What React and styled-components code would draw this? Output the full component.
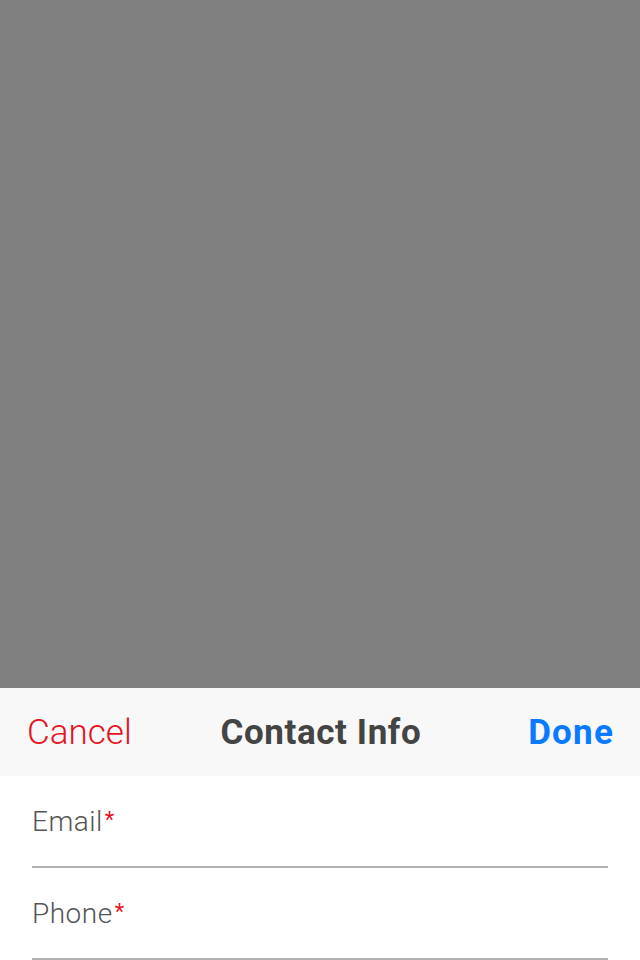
import React from 'react';
import styled, { createGlobalStyle } from 'styled-components';

const GlobalStyle = createGlobalStyle`
  html, body {
    margin: 0;
    padding: 0;
    background: #808080;
    font-family: Roboto, 'Noto Sans', sans-serif;
  }
`;

const Screen = styled.div`
  display: flex;
  flex-direction: column;
  justify-content: flex-end;
  height: 960px;
  background: #808080;
`;

const Sheet = styled.div`
  background: #ffffff;
`;

const Header = styled.div`
  display: flex;
  align-items: center;
  justify-content: space-between;
  height: 88px;
  padding: 0 26px 0 27px;
  background: #f8f8f8;
`;

const HeaderButton = styled.button`
  border: 0;
  background: none;
  padding: 0;
  font-family: Roboto, sans-serif;
  font-size: 35px;
  font-weight: ${p => (p.primary ? 700 : 300)};
  letter-spacing: ${p => (p.primary ? '1.2px' : '0')};
  color: ${p => (p.primary ? '#0a7aff' : '#e5141e')};
  min-width: 104px;
  text-align: ${p => (p.primary ? 'right' : 'left')};
`;

const Title = styled.h1`
  margin: 0;
  font-size: 35px;
  font-weight: 700;
  letter-spacing: 0.6px;
  color: #444444;
`;

const Form = styled.div`
  padding: 0 32px;
`;

const Field = styled.label`
  display: flex;
  align-items: center;
  height: 90px;
  border-bottom: 2px solid #b3b3b3;
  font-size: 28px;
  font-weight: 300;
  letter-spacing: 0.5px;
  color: #555555;
`;

const Required = styled.span`
  align-self: flex-start;
  margin: 33px 0 0 2px;
  font-size: 22px;
  font-weight: 400;
  line-height: 1;
  color: #e5141e;
`;

export default function App() {
  return (
    <>
      <GlobalStyle />
      <Screen>
        <Sheet>
          <Header>
            <HeaderButton>Cancel</HeaderButton>
            <Title>Contact Info</Title>
            <HeaderButton primary>Done</HeaderButton>
          </Header>
          <Form>
            <Field>
              Email<Required>*</Required>
            </Field>
            <Field>
              Phone<Required>*</Required>
            </Field>
          </Form>
        </Sheet>
      </Screen>
    </>
  );
}
